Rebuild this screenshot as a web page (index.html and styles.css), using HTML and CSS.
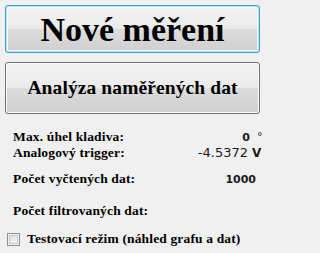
FILE: index.html
```html
<!DOCTYPE html>
<html lang="cs">
<head>
<meta charset="utf-8">
<link rel="stylesheet" href="styles.css">
</head>
<body>
<div class="panel">
  <button class="btn btn-main">Nové měření</button>
  <button class="btn btn-second">Analýza naměřených dat</button>
  <div class="info">
    <div class="row row-first">
      <span class="label">Max. úhel kladiva:</span>
      <span class="val bold">0</span>
      <span class="unit deg">°</span>
    </div>
    <div class="row">
      <span class="label">Analogový trigger:</span>
      <span class="val regular">-4.5372</span>
      <span class="unit">V</span>
    </div>
    <div class="row row-gap1">
      <span class="label">Počet vyčtených dat:</span>
      <span class="val bold count">1000</span>
    </div>
    <div class="row row-gap2">
      <span class="label">Počet filtrovaných dat:</span>
    </div>
    <label class="check-row">
      <span class="checkbox"></span>
      <span class="label">Testovací režim (náhled grafu a dat)</span>
    </label>
  </div>
</div>
</body>
</html>
```
FILE: styles.css
```css
html, body {
  margin: 0;
  padding: 0;
  background: #f0f0f0;
}
body {
  width: 265px;
  height: 253px;
  overflow: hidden;
  font-family: "Liberation Serif", serif;
}
.panel {
  display: flex;
  flex-direction: column;
  padding: 5px 0 0 5px;
}
.btn {
  box-sizing: border-box;
  width: 255px;
  margin: 0;
  padding: 0;
  border-radius: 3px;
  font-family: "Liberation Serif", serif;
  font-weight: bold;
  color: #000;
  background: linear-gradient(to bottom, #f2f2f2 0%, #ebebeb 50%, #dddddd 50%, #cfcfcf 100%);
  box-shadow: inset 0 0 0 1px #fcfcfc;
}
.btn-main {
  height: 48px;
  border: 1px solid #3c9fca;
  font-size: 34px;
  line-height: 44px;
  padding-top: 1px;
  box-shadow: inset 0 0 0 1px #b7e3f5, inset 0 0 0 2px #f4fbfe;
}
.btn-second {
  margin-top: 9px;
  height: 52px;
  border: 1px solid #707070;
  font-size: 19.5px;
  line-height: 48px;
  letter-spacing: 0.1px;
}
.info {
  display: flex;
  flex-direction: column;
  margin-left: -5px;
  width: 265px;
}
.row {
  display: flex;
  align-items: baseline;
  height: 16px;
  line-height: 16px;
  padding-left: 13px;
}
.row-first {
  margin-top: 15px;
}
.row-gap1 {
  margin-top: 10px;
}
.row-gap2 {
  margin-top: 16px;
}
.label {
  flex: 1;
  font-family: "Liberation Serif", serif;
  font-size: 13.5px;
  font-weight: bold;
  letter-spacing: 0.15px;
  color: #000;
  white-space: nowrap;
}
.val {
  font-family: "DejaVu Sans", sans-serif;
  color: #1a1a1a;
  text-align: right;
  width: 80px;
}
.val.bold {
  font-weight: bold;
  font-size: 11px;
}
.val.regular {
  font-size: 13px;
  margin-right: 2px;
}
.val.count {
  margin-right: 9px;
}
.unit {
  width: 13px;
  padding-left: 2px;
  font-family: "DejaVu Sans", sans-serif;
  font-weight: bold;
  font-size: 12px;
  color: #1a1a1a;
}
.unit.deg {
  padding-left: 7px;
  width: 8px;
  font-size: 11px;
  font-weight: normal;
  position: relative;
  top: -1px;
}
.check-row {
  display: flex;
  align-items: center;
  margin-top: 12px;
  padding-left: 7px;
  height: 16px;
  line-height: 16px;
  gap: 7px;
}
.checkbox {
  box-sizing: border-box;
  width: 13px;
  height: 13px;
  border: 1px solid #8e8f8f;
  background: linear-gradient(135deg, #d6d6d6 0%, #f2f2f2 70%, #fafafa 100%);
  box-shadow: inset 0 0 0 1px #f4f4f4, inset 0 0 0 2px #c9c9c9;
}
.check-row .label {
  flex: none;
}
```
